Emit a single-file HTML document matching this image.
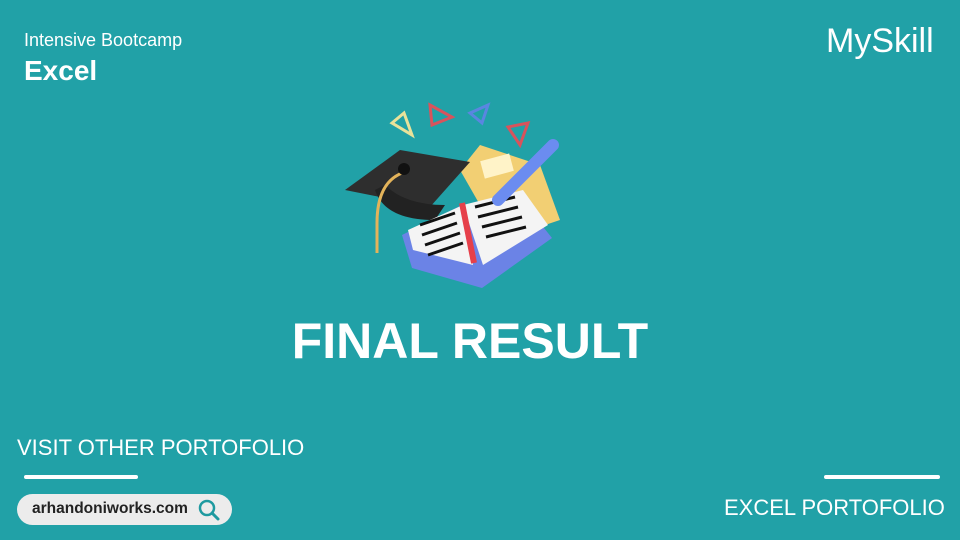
<!DOCTYPE html>
<html><head><style>
body{margin:0;width:960px;height:540px;background:#21a1a7;position:relative;overflow:hidden;font-family:"Liberation Sans",sans-serif;color:#fff}
.a{position:absolute}
</style></head><body>
<div class="a" style="left:24px;top:30px;font-size:18px">Intensive Bootcamp</div>
<div class="a" style="left:24px;top:55px;font-size:28px;font-weight:bold">Excel</div>
<div class="a" style="left:826px;top:22px;font-size:34px">MySkill</div>
<svg class="a" style="left:330px;top:95px" width="240" height="210" viewBox="0 0 240 210">
<path d="M62 28l12 -10 8 22z" fill="none" stroke="#e8e29a" stroke-width="3"/>
<path d="M100 10l22 12-20 8z" fill="none" stroke="#d8535c" stroke-width="3"/>
<path d="M140 18l18-8-6 18z" fill="none" stroke="#5a86e0" stroke-width="3"/>
<path d="M178 32l20-4-8 22z" fill="none" stroke="#d8535c" stroke-width="3"/>
<path d="M150 50l60 20 20 55-60 20-40-70z" fill="#f2cf73"/>
<rect x="152" y="62" width="30" height="18" fill="#fff3c8" transform="rotate(-15 167 71)"/>
<path d="M15 95l55-40 70 12-40 45z" fill="#2e2e2e"/>
<path d="M45 95q10 30 60 30l10-15q-40 0-60-20z" fill="#222"/>
<path d="M72 78q-25 10-25 50l0 30" fill="none" stroke="#e3b35a" stroke-width="3"/>
<circle cx="74" cy="74" r="6" fill="#111"/>
<path d="M72 140l60-30 70 8 20 25-70 50-70-20z" fill="#6b83e6"/>
<path d="M78 135l55-25 10 60-60-15z" fill="#f4f4f4"/>
<path d="M133 110l60-15 25 35-65 40z" fill="#f4f4f4"/>
<path d="M132 108l12 60" stroke="#e6404a" stroke-width="6"/>
<path d="M90 130l35-12M92 140l35-12M95 150l35-12M98 160l35-12M145 112l40-10M148 122l40-10M152 132l40-10M156 142l40-10" stroke="#111" stroke-width="3"/>
<path d="M168 105l55-55" stroke="#6b8cf0" stroke-width="12" stroke-linecap="round"/>
</svg>
<div class="a" style="left:0;width:940px;top:312px;text-align:center;font-size:50px;font-weight:bold">FINAL RESULT</div>
<div class="a" style="left:17px;top:435px;font-size:22px">VISIT OTHER PORTOFOLIO</div>
<div class="a" style="left:24px;top:475px;width:114px;height:4px;border-radius:2px;background:#fff"></div>
<div class="a" style="left:17px;top:494px;width:215px;height:31px;border-radius:16px;background:#ececec"></div>
<div class="a" style="left:32px;top:500px;font-size:15.5px;font-weight:bold;color:#222">arhandoniworks.com</div>
<svg class="a" style="left:197px;top:498px" width="24" height="24"><circle cx="10" cy="10" r="7" fill="none" stroke="#1f9aa0" stroke-width="2.5"/><path d="M15 15l6 6" stroke="#1f9aa0" stroke-width="3" stroke-linecap="round"/></svg>
<div class="a" style="left:824px;top:475px;width:116px;height:4px;border-radius:2px;background:#fff"></div>
<div class="a" style="left:724px;top:495px;font-size:22px">EXCEL PORTOFOLIO</div>
</body></html>
